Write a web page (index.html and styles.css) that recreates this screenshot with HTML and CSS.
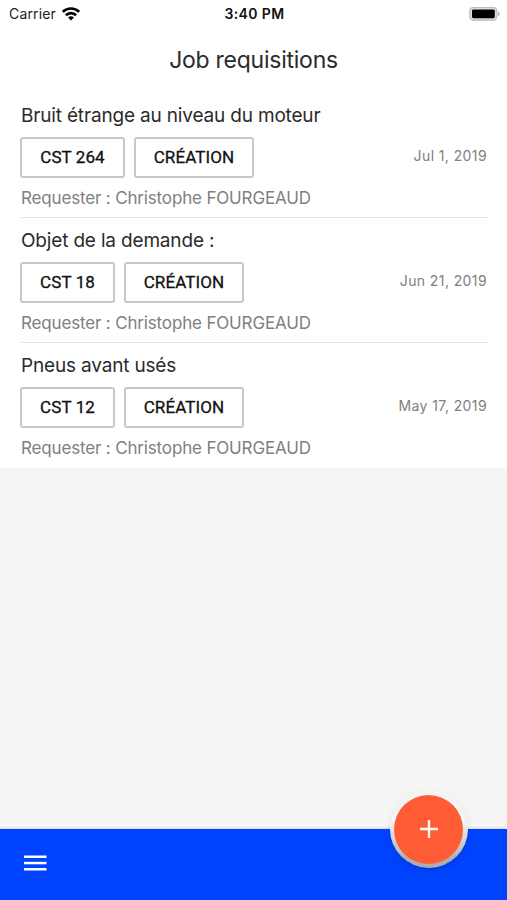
FILE: index.html
```html
<!DOCTYPE html>
<html lang="en">
<head>
    <meta charset="UTF-8">
    <meta name="viewport" content="width=device-width, initial-scale=1.0">
    <title>Job requisitions</title>
    <link rel="stylesheet" href="styles.css">
</head>
<body>
    <div class="screen">
        <div class="status-bar">
            <div class="carrier">
                <span>Carrier</span>
                <svg class="wifi" width="18" height="14" viewBox="0 0 18 14">
                    <g fill="none" stroke="#000" stroke-width="2.7">
                        <path d="M0.8 4.9a11.6 11.6 0 0 1 16.4 0"/>
                        <path d="M3.9 8.2a7.2 7.2 0 0 1 10.2 0"/>
                    </g>
                    <path d="M9 13.6l-2.9-3a4.1 4.1 0 0 1 5.8 0z"/>
                </svg>
            </div>
            <span class="time">3:40 PM</span>
            <svg class="battery" width="32" height="14" viewBox="0 0 32 14">
                <rect x="1.8" y="0.4" width="27" height="12.8" rx="3.6" fill="#dedede" stroke="#bcbcbc" stroke-width="1.2"/>
                <rect x="4" y="2.4" width="22.8" height="8.8" rx="1.4"/>
                <path d="M30 4.4c2.2.8 2.2 4 0 4.8z" fill="#b0b0b0"/>
            </svg>
        </div>

        <header class="header">
            <h1 class="title">Job requisitions</h1>
        </header>

        <main class="list">
            <article class="item">
                <h2 class="subject">Bruit étrange au niveau du moteur</h2>
                <div class="row">
                    <button class="tag tag-wide">CST 264</button>
                    <button class="tag tag-state">CRÉATION</button>
                    <time class="date">Jul 1, 2019</time>
                </div>
                <p class="requester">Requester : Christophe FOURGEAUD</p>
            </article>
            <article class="item">
                <h2 class="subject">Objet de la demande :</h2>
                <div class="row">
                    <button class="tag">CST 18</button>
                    <button class="tag tag-state">CRÉATION</button>
                    <time class="date">Jun 21, 2019</time>
                </div>
                <p class="requester">Requester : Christophe FOURGEAUD</p>
            </article>
            <article class="item">
                <h2 class="subject">Pneus avant usés</h2>
                <div class="row">
                    <button class="tag">CST 12</button>
                    <button class="tag tag-state">CRÉATION</button>
                    <time class="date">May 17, 2019</time>
                </div>
                <p class="requester">Requester : Christophe FOURGEAUD</p>
            </article>
        </main>

        <footer class="bottom-bar">
            <button class="menu" aria-label="Menu">
                <svg width="23" height="16" viewBox="0 0 23 16" fill="#fff">
                    <rect y="0.5" width="22.5" height="2.5"/>
                    <rect y="6.8" width="22.5" height="2.5"/>
                    <rect y="13" width="22.5" height="2.5"/>
                </svg>
            </button>
            <div class="fab-notch">
                <button class="fab" aria-label="Add">
                    <svg width="18" height="18" viewBox="0 0 18 18">
                        <path d="M9 0v18M0 9h18" stroke="#fff" stroke-width="2.4"/>
                    </svg>
                </button>
            </div>
        </footer>
    </div>
</body>
</html>
```

FILE: styles.css
```css
/* Global Styles */
* {
    box-sizing: border-box;
}

body {
    margin: 0;
    background-color: #f5f5f5;
    color: #2b2b2b;
    font-family: Inter, "Liberation Sans", sans-serif;
}

h1,
h2,
p {
    margin: 0;
    font-weight: 400;
    white-space: nowrap;
}

button {
    padding: 0;
    border: none;
    background: none;
}

.screen {
    display: flex;
    flex-direction: column;
    height: 900px;
    overflow: hidden;
}

/* Status Bar */
.status-bar {
    display: grid;
    grid-template-columns: 1fr auto 1fr;
    align-items: center;
    height: 27px;
    padding: 0 7px 0 9px;
    background: white;
    color: #222;
    font-size: 14px;
}

.carrier {
    display: flex;
    align-items: center;
    gap: 6px;
    letter-spacing: 0.15px;
}

.time {
    color: #111;
    font-weight: 600;
    letter-spacing: 0.4px;
}

.battery {
    justify-self: end;
}

/* Header */
.header {
    height: 66px;
    background: white;
    text-align: center;
}

.title {
    font-size: 23px;
    line-height: 66px;
    letter-spacing: -0.25px;
}

/* Requisition List */
.list {
    padding: 0 19px 0 20px;
    background: white;
}

.item {
    height: 125px;
    padding-top: 11px;
    border-bottom: 1px solid #e4e4e4;
}

.item:last-child {
    border-bottom: none;
}

.subject {
    padding-left: 1px;
    font-size: 19px;
    line-height: 24px;
    letter-spacing: -0.17px;
}

.row {
    display: flex;
    align-items: center;
    gap: 9px;
    margin-top: 9px;
}

.tag {
    width: 95px;
    height: 41px;
    padding-bottom: 2px;
    border: 2px solid #c8c8c8;
    border-radius: 3px;
    color: #111;
    font-family: Roboto, sans-serif;
    font-size: 17px;
    font-weight: 400;
    letter-spacing: 0.1px;
    -webkit-text-stroke: 0.3px #111;
}

.tag-wide {
    width: 105px;
}

.tag-state {
    width: 120px;
}

.date {
    margin-left: auto;
    padding: 0 1px 4px 0;
    color: #808080;
    font-size: 14px;
    letter-spacing: 0.4px;
}

.requester {
    margin-top: 8px;
    padding-left: 1px;
    color: #808080;
    font-size: 17px;
    line-height: 24px;
    letter-spacing: -0.16px;
}

/* Bottom Bar */
.bottom-bar {
    position: relative;
    height: 71px;
    margin-top: auto;
    padding: 26px 0 0 24px;
    background: #0043ff;
    box-shadow: 0 -1px 2px rgba(0, 0, 0, 0.15);
}

.menu {
    display: flex;
}

.fab-notch {
    position: absolute;
    top: -39px;
    right: 39.5px;
    width: 78px;
    height: 78px;
    padding: 4.5px;
    border-radius: 50%;
    background: linear-gradient(#f4f4f4 40%, #adadad 90%);
    box-shadow: 0 3px 6px rgba(0, 0, 0, 0.12);
}

.fab {
    display: flex;
    align-items: center;
    justify-content: center;
    width: 69px;
    height: 69px;
    border-radius: 50%;
    background: #ff5c35;
}
```
